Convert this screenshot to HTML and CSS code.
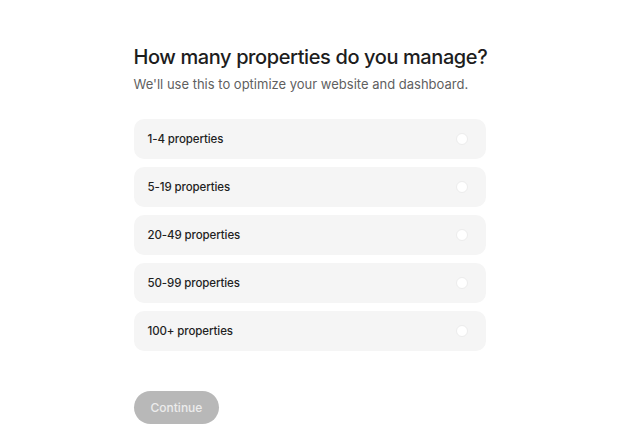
FILE: index.html
```html
<!DOCTYPE html>
<html lang="en">
<head>
    <meta charset="UTF-8">
    <meta name="viewport" content="width=device-width, initial-scale=1.0">
    <title>Properties</title>
    <link rel="stylesheet" href="styles.css">
</head>
<body>
    <div class="container">
        <h1>How many properties do you manage?</h1>
        <p class="subtitle">We'll use this to optimize your website and dashboard.</p>

        <div class="options">
            <label class="option"><span>1-4 properties</span><input type="radio" name="count"></label>
            <label class="option"><span>5-19 properties</span><input type="radio" name="count"></label>
            <label class="option"><span>20-49 properties</span><input type="radio" name="count"></label>
            <label class="option"><span>50-99 properties</span><input type="radio" name="count"></label>
            <label class="option"><span>100+ properties</span><input type="radio" name="count"></label>
        </div>

        <button type="button" class="continue" disabled>Continue</button>
    </div>
</body>
</html>
```

FILE: styles.css
```css
body {
    font-family: 'Inter', 'Noto Sans', sans-serif;
    margin: 0;
    padding: 0;
    background: #fff;
    color: #1f1f1f;
}
.container {
    width: 352px;
    margin: 0 auto;
    padding-top: 43px;
}
h1 {
    font-size: 20px;
    font-weight: 500;
    letter-spacing: -0.4px;
    white-space: nowrap;
    margin: 0;
    line-height: 28px;
    color: #1d1d1d;
}
.subtitle {
    font-size: 13px;
    color: #5f5f5f;
    white-space: nowrap;
    margin: 3px 0 0;
    line-height: 20px;
}
.options {
    display: flex;
    flex-direction: column;
    gap: 8px;
    margin-top: 25px;
}
.option {
    display: flex;
    align-items: center;
    justify-content: space-between;
    height: 40px;
    padding: 0 18px 0 14px;
    background: #f5f5f5;
    border-radius: 10px;
    font-size: 11.5px;
    font-weight: 500;
    letter-spacing: -0.1px;
    color: #1f1f1f;
    cursor: pointer;
}
.option input {
    appearance: none;
    width: 12px;
    height: 12px;
    margin: 0;
    border-radius: 50%;
    background: #fff;
    border: 1px solid #ececec;
}
.continue {
    margin-top: 40px;
    height: 33px;
    padding: 0 17px;
    font-family: inherit;
    font-size: 12px;
    font-weight: 500;
    background: #b8b8b8;
    color: #ececec;
    border: none;
    border-radius: 17px;
}
```
